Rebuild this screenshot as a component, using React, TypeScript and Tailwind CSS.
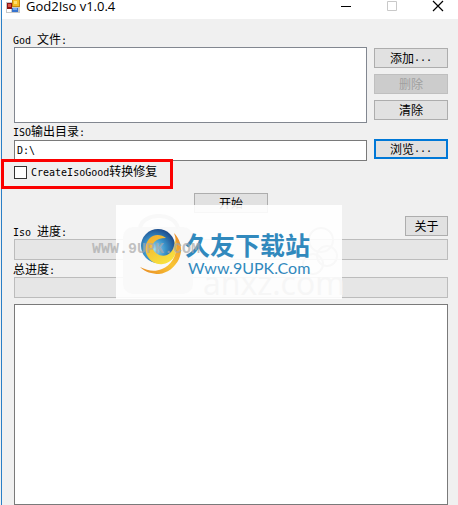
import { useState } from "react";

const BTN =
  "h-5 border border-[#adadad] bg-[#e1e1e1] text-[12px] leading-3 text-black flex items-center justify-center";
const LABEL = "block h-4 -ml-px text-[12px] leading-4 text-black whitespace-pre";

// Latin runs are set in a half-width mono face beside the 12px CJK glyphs
const Mono = ({ children }: { children: string }) => (
  <span className="font-['DejaVu_Sans_Mono',monospace] text-[10px]">{children}</span>
);

const AppIcon = () => (
  <svg width="14" height="13" viewBox="0 0 14 13" className="shrink-0" shapeRendering="crispEdges">
    <rect x="0" y="2" width="14" height="11" fill="#c8c8c8" />
    <rect x="1" y="9" width="4" height="3" fill="#fff" />
    <rect x="1" y="3" width="5" height="6" fill="#8d1512" />
    <rect x="2" y="4" width="3" height="3" fill="#d9534a" />
    <rect x="6" y="0" width="8" height="7" fill="#c58a10" />
    <rect x="7" y="0" width="6" height="6" fill="#f5bd25" />
    <rect x="8" y="1" width="3" height="3" fill="#ffdf70" />
    <rect x="6" y="8" width="6" height="4" fill="#3774cf" />
    <rect x="7" y="8" width="4" height="2" fill="#78aaf0" />
  </svg>
);

const TitleBar = () => (
  <header className="flex h-[19px] items-start bg-white pl-1">
    <AppIcon />
    <h1 className="ml-[6px] flex-1 text-[13px] leading-3 text-black font-['Open_Sans','Noto_Sans',sans-serif]">
      God2Iso v1.0.4
    </h1>
    <div className="flex gap-[34px] pr-[14px]">
      <button type="button" aria-label="Minimize">
        <svg width="12" height="12" viewBox="0 0 12 12">
          <path d="M1 6.5h10" stroke="#000" />
        </svg>
      </button>
      <button type="button" aria-label="Maximize" disabled>
        <svg width="12" height="12" viewBox="0 0 12 12">
          <path d="M1.500 1.500h9v9h-9z" fill="none" stroke="#c9c9c9" />
        </svg>
      </button>
      <button type="button" aria-label="Close">
        <svg width="12" height="12" viewBox="0 0 12 12">
          <path d="M1 1l10 10M11 1L1 11" stroke="#000" strokeWidth="1.200" />
        </svg>
      </button>
    </div>
  </header>
);

const Progress = ({ label }: { label: string }) => (
  <div
    role="progressbar"
    aria-label={label}
    aria-valuenow={0}
    className="h-[21px] border border-[#bcbcbc] bg-[#e6e6e6]"
  />
);

const SiteLogo = () => (
  <svg width="43" height="46" viewBox="0 0 43 46">
    <defs>
      <radialGradient id="globe" cx="0.4" cy="0.6" r="0.65">
        <stop offset="0" stopColor="#9edcf2" />
        <stop offset="0.5" stopColor="#3a93c9" />
        <stop offset="1" stopColor="#1b4688" />
      </radialGradient>
      <linearGradient id="swirl" x1="0" y1="0" x2="0.6" y2="1">
        <stop offset="0" stopColor="#f3a92c" />
        <stop offset="1" stopColor="#f7e23e" />
      </linearGradient>
      <linearGradient id="tail" x1="1" y1="0" x2="0" y2="1">
        <stop offset="0" stopColor="#e8862a" />
        <stop offset="0.5" stopColor="#f9c534" />
        <stop offset="1" stopColor="#e88a25" />
      </linearGradient>
    </defs>
    <circle cx="19" cy="17" r="17" fill="url(#globe)" />
    <path
      d="M27 9C22 5 14 5 10 10c-4 5-5 12-1 18 3 5 9 8 15 7 7-1 12-6 13-13 1-5 0-10-1-13 0 8-2 14-8 17-6 2-12-1-14-6-2-5 2-11 13-11z"
      fill="url(#swirl)"
    />
    <path
      d="M35 4c7 7 9 17 5 26-4 8-11 14-20 15-7 0-14-2-19-7 8 4 15 5 22 2C35 35 41 21 35 4z"
      fill="url(#tail)"
    />
  </svg>
);

const Watermark = () => (
  <div className="pointer-events-none absolute left-[116px] top-[205px] h-[94px] w-[226px] bg-white/90">
    <svg className="absolute inset-0" width="226" height="94" viewBox="0 0 226 94" fill="none">
      <rect x="7" y="22" width="70" height="67" rx="10" fill="#f9f9f9" />
      <path d="M24 23c2-15 34-17 38 0" stroke="#f8f8f8" strokeWidth="4" />
      <g stroke="#f8f8f8" strokeWidth="2">
        <circle cx="205" cy="35" r="12" />
        <circle cx="211" cy="51" r="10" />
        <circle cx="197" cy="59" r="10" />
      </g>
    </svg>
    <span className="absolute left-[87px] top-[62px] text-[32px] leading-8 text-[#f6f6f6] font-['Open_Sans',sans-serif]">
      anxz.com
    </span>
    <div className="absolute left-[23px] top-6 flex gap-[3px]">
      <SiteLogo />
      <div className="whitespace-nowrap text-[#3189bd]">
        <div className="text-[25px] font-bold leading-[30px] font-['Noto_Sans_CJK_SC',sans-serif]">
          久友下载站
        </div>
        <div className="pl-[3px] text-[16px] leading-[18px] font-['Lato',sans-serif]">Www.9UPK.Com</div>
      </div>
    </div>
    <span className="absolute left-[-24px] top-[37px] whitespace-nowrap text-[15px] font-bold leading-4 text-[#a8a8a8]/70 font-['Liberation_Mono',monospace]">
      WWW.9UPK.COM
    </span>
  </div>
);

export default function App() {
  const [outputDir, setOutputDir] = useState("D:\\");
  const [createFix, setCreateFix] = useState(false);

  return (
    <div className="relative flex min-h-screen flex-col bg-[#f0f0f0] pl-px font-['Noto_Sans_CJK_SC',sans-serif]">
      <div className="flex flex-1 flex-col border-l border-[#2a7fc6]">
        <TitleBar />
        <main className="flex flex-1 flex-col pl-3 pr-[10px] pt-3">
          <label htmlFor="files" className={LABEL}>
            <Mono>{"God "}</Mono>文件<Mono>:</Mono>
          </label>
          <div className="flex gap-[7px]">
            <textarea
              id="files"
              readOnly
              className="block h-[76px] min-w-0 flex-1 resize-none border border-[#828790] bg-white outline-none"
            />
            <div className="flex w-[74px] flex-col gap-[6px] pt-px">
              <button type="button" className={BTN}>
                添加<Mono>...</Mono>
              </button>
              <button
                type="button"
                disabled
                className="flex h-5 items-center justify-center border border-[#bfbfbf] bg-[#cccccc] text-[12px] leading-3 text-[#a0a0a0]"
              >
                删除
              </button>
              <button type="button" className={BTN}>
                清除
              </button>
            </div>
          </div>

          <label htmlFor="output" className={LABEL}>
            <Mono>ISO</Mono>输出目录<Mono>:</Mono>
          </label>
          <div className="flex items-start gap-[7px]">
            <input
              id="output"
              type="text"
              value={outputDir}
              onChange={(e) => setOutputDir(e.target.value)}
              className="mt-px h-[21px] min-w-0 flex-1 border border-[#7a7a7a] bg-white px-[2px] text-[10px] outline-none font-['DejaVu_Sans_Mono',monospace]"
            />
            <button
              type="button"
              className="flex h-5 w-[74px] items-center justify-center border-2 border-[#0078d7] bg-[#e1e1e1] text-[12px] leading-3 text-black"
            >
              浏览<Mono>...</Mono>
            </button>
          </div>

          <div className="relative flex h-[22px] items-center">
            <label className="flex h-4 items-center gap-1 text-[12px] leading-4">
              <input
                type="checkbox"
                checked={createFix}
                onChange={(e) => setCreateFix(e.target.checked)}
                className="size-[13px] appearance-none border border-[#333] bg-white checked:bg-[#0078d7]"
              />
              <span>
                <Mono>CreateIsoGood</Mono>转换修复
              </span>
            </label>
            <div className="pointer-events-none absolute -left-[13px] -top-[2px] h-[30px] w-[172px] border-[3px] border-[#fb0000]" />
          </div>

          <div className="flex justify-center pt-[10px]">
            <button type="button" className={`${BTN} w-[74px]`}>
              开始
            </button>
          </div>
          <div className="flex items-end justify-between pt-[3px]">
            <span className={LABEL}>
              <Mono>{"Iso "}</Mono>进度<Mono>:</Mono>
            </span>
            <button type="button" className={`${BTN} mb-[3px] w-[43px]`}>
              关于
            </button>
          </div>
          <Progress label="Iso 进度" />
          <div className="pt-px">
            <span className={LABEL}>
              总进度<Mono>:</Mono>
            </span>
          </div>
          <Progress label="总进度" />
          <textarea
            readOnly
            aria-label="Log"
            className="mt-[6px] block min-h-[120px] flex-1 resize-none border border-[#7a7a7a] bg-white outline-none"
          />
        </main>
      </div>
      <Watermark />
    </div>
  );
}
